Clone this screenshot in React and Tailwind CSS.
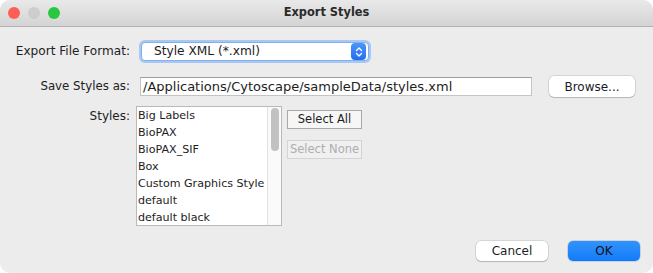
import React from "react";

function Light({ color }) {
  return <div className={`w-[12px] h-[12px] rounded-full ${color}`} />;
}

export default function App() {
  const items = [
    "Big Labels",
    "BioPAX",
    "BioPAX_SIF",
    "Box",
    "Custom Graphics Style",
    "default",
    "default black",
  ];
  return (
    <div className="w-[653px] h-[273px] bg-white font-['DejaVu_Sans',sans-serif] text-[#1d1d1d]">
      <div className="w-full h-full rounded-[10px] overflow-hidden bg-[#ececec] flex flex-col">
        {/* title bar */}
        <div className="h-[27px] shrink-0 bg-gradient-to-b from-[#e9e9e9] to-[#d4d4d4] border-b border-[#b3b3b3] flex items-center relative">
          <div className="flex gap-[8px] pl-[8px]">
            <Light color="bg-[#fd5f57]" />
            <Light color="bg-[#cdcdcd]" />
            <Light color="bg-[#27c83f]" />
          </div>
          <div className="absolute inset-0 flex items-center justify-center text-[11.4px] font-bold text-[#2a2a2a]">
            Export Styles
          </div>
        </div>

        {/* body */}
        <div className="flex-1 flex flex-col pt-[13px]">
          {/* row 1 */}
          <div className="flex items-center h-[23px]">
            <div className="w-[130px] text-right text-[12.1px]">Export File Format:</div>
            <div className="ml-[9px] w-[232px] h-[23px] rounded-[6px] bg-[#a7c8f5] p-[2px]">
              <div className="w-full h-full rounded-[4px] bg-white border border-[#86aeea] flex items-center pl-[12px] pr-[2px]">
                <span className="flex-1 text-[12.2px]">Style XML (*.xml)</span>
                <div className="w-[15px] h-[17px] rounded-[4px] bg-gradient-to-b from-[#4d95f8] to-[#1f6fef] flex items-center justify-center">
                  <svg width="8" height="12" viewBox="0 0 8 12" fill="none" stroke="white" strokeWidth="1.4" strokeLinecap="round" strokeLinejoin="round">
                    <path d="M1.5 4.5 L4 2 L6.5 4.5" />
                    <path d="M1.5 7.5 L4 10 L6.5 7.5" />
                  </svg>
                </div>
              </div>
            </div>
          </div>

          {/* row 2 */}
          <div className="flex items-center h-[21px] mt-[13px]">
            <div className="w-[130px] text-right text-[11.8px]">Save Styles as:</div>
            <div className="ml-[10px] w-[392px] h-[19px] bg-white border border-[#c4c4c4] border-t-[#9d9d9d] flex items-center pl-[2px] text-[13px] leading-none">
              /Applications/Cytoscape/sampleData/styles.xml
            </div>
            <div className="ml-[17px] w-[86px] h-[21px] rounded-[5px] bg-white shadow-[0_0_0_0.5px_rgba(0,0,0,0.2),0_1px_1px_rgba(0,0,0,0.15)] flex items-center justify-center text-[12px]">
              Browse...
            </div>
          </div>

          {/* row 3 */}
          <div className="flex items-start mt-[9px]">
            <div className="w-[130px] text-right text-[12px] pt-[1px]">Styles:</div>
            <div className="ml-[6px] w-[146px] h-[120px] bg-white border border-[#b9b9b9] flex">
              <div className="flex-1 flex flex-col text-[11.1px] leading-[17px] pl-[1px] overflow-hidden">
                {items.map((it) => (
                  <div key={it} className="whitespace-nowrap">{it}</div>
                ))}
              </div>
              <div className="w-[14px] border-l border-[#e2e2e2] bg-[#fafafa] flex justify-center pt-[1px]">
                <div className="w-[8px] h-[43px] rounded-full bg-[#c2c2c2]" />
              </div>
            </div>
            <div className="ml-[5px] flex flex-col pt-[4px] gap-[11px]">
              <div className="w-[75px] h-[19px] bg-[#f6f6f6] border border-[#a9a9a9] flex items-center justify-center text-[11.5px]">
                Select All
              </div>
              <div className="w-[75px] h-[19px] bg-[#f0f0f0] border border-[#d4d4d4] flex items-center justify-center text-[11.5px] text-[#aeaeae]">
                Select None
              </div>
            </div>
          </div>

          {/* bottom */}
          <div className="mt-auto flex justify-end gap-[20px] pr-[13px] pb-[12px]">
            <div className="w-[72px] h-[20px] rounded-[5px] bg-white shadow-[0_0_0_0.5px_rgba(0,0,0,0.2),0_1px_1px_rgba(0,0,0,0.15)] flex items-center justify-center text-[12px]">
              Cancel
            </div>
            <div className="w-[72px] h-[20px] rounded-[5px] bg-gradient-to-b from-[#3393fb] to-[#107bf9] shadow-[0_0_0_0.5px_rgba(0,60,160,0.3)] flex items-center justify-center text-[12px] text-[#111]">
              OK
            </div>
          </div>
        </div>
      </div>
    </div>
  );
}
